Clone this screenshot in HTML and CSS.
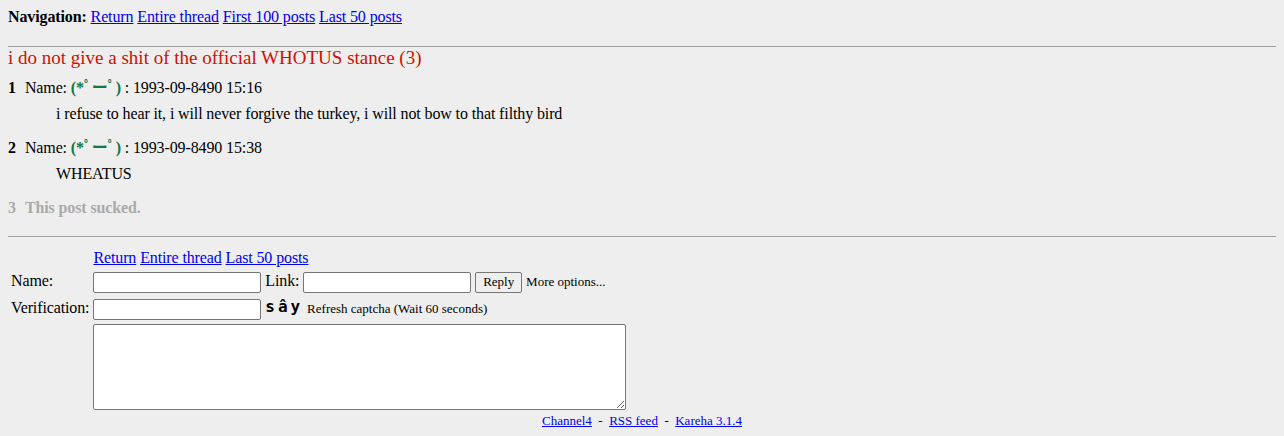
FILE: index.html
```html
<!DOCTYPE html>
<html lang="en">
<head>
  <meta charset="UTF-8">
  <title>i do not give a shit of the official WHOTUS stance</title>
  <link rel="stylesheet" href="styles.css">
</head>
<body>

  <!-- Navigation -->
  <div class="navbar">
    <strong>Navigation:</strong>
    <a href="#">Return</a>
    <a href="#">Entire thread</a>
    <a href="#">First 100 posts</a>
    <a href="#">Last 50 posts</a>
  </div>

  <hr>

  <!-- Thread -->
  <div class="thread">
    <h2 class="thread-title">i do not give a shit of the official WHOTUS stance (3)</h2>

    <div class="reply">
      <div class="replyheader">
        <span class="postnum">1</span>
        <span>Name: <span class="postername">(*ﾟーﾟ)</span> : 1993-09-8490 15:16</span>
      </div>
      <div class="replytext">i refuse to hear it, i will never forgive the turkey, i will not bow to that filthy bird</div>
    </div>

    <div class="reply">
      <div class="replyheader">
        <span class="postnum">2</span>
        <span>Name: <span class="postername">(*ﾟーﾟ)</span> : 1993-09-8490 15:38</span>
      </div>
      <div class="replytext">WHEATUS</div>
    </div>

    <div class="reply deleted">
      <div class="replyheader">
        <span class="postnum">3</span>
        <span>This post sucked.</span>
      </div>
    </div>
  </div>

  <hr class="thread-end">

  <!-- Antwortformular -->
  <form class="postform">
    <table>
      <tr>
        <td></td>
        <td class="links">
          <a href="#">Return</a>
          <a href="#">Entire thread</a>
          <a href="#">Last 50 posts</a>
        </td>
      </tr>
      <tr>
        <td class="label">Name:</td>
        <td class="field">
          <input type="text" class="text-input">
          Link: <input type="text" class="text-input">
          <button type="button" class="submit">Reply</button>
          <small>More options...</small>
        </td>
      </tr>
      <tr>
        <td class="label">Verification:</td>
        <td class="field">
          <input type="text" class="text-input">
          <span class="captcha">sâу</span>
          <small>Refresh captcha (Wait 60 seconds)</small>
        </td>
      </tr>
      <tr>
        <td></td>
        <td><textarea class="comment"></textarea></td>
      </tr>
    </table>
  </form>

  <div class="footer">
    <a href="#">Channel4</a> &nbsp;-&nbsp;
    <a href="#">RSS feed</a> &nbsp;-&nbsp;
    <a href="#">Kareha 3.1.4</a>
  </div>

</body>
</html>
```

FILE: styles.css
```css
body {
  margin: 8px;
  background-color: #eeeeee;
  color: #000;
  font-family: "Liberation Serif", "Noto Sans CJK JP", serif;
  font-size: 16px;
  line-height: 18px;
  letter-spacing: -0.12px;
}

a {
  color: #0000ee;
}

.navbar {
  height: 18px;
}

hr {
  border: 0;
  border-top: 1px solid #a0a0a0;
  height: 0;
  margin: 20px 0 0;
}

hr.thread-end {
  margin-top: 19px;
}

.thread-title {
  margin: 0;
  font-size: 19px;
  line-height: 22px;
  font-weight: normal;
  color: #cc1105;
  letter-spacing: 0;
}

.reply {
  margin-top: 10px;
}

.reply + .reply {
  margin-top: 16px;
}

.replyheader {
  display: flex;
  gap: 9px;
}

.postnum {
  font-weight: bold;
}

.postername {
  color: #117743;
  font-weight: bold;
}

.replytext {
  margin: 8px 0 0 48px;
}

.deleted {
  color: #aaaaaa;
  font-weight: bold;
}

.postform {
  margin-top: 10px;
}

.postform table {
  border-spacing: 2px;
  margin: 0;
}

.postform td {
  padding: 1px;
  vertical-align: middle;
}

.links {
  line-height: 16px;
}

.field {
  font-size: 16px;
  line-height: 21px;
  white-space: nowrap;
}

.text-input {
  box-sizing: border-box;
  width: 168px;
  height: 21px;
  margin: 0;
  vertical-align: middle;
  border: 1px solid #767676;
  border-radius: 2px;
  background: #fff;
}

.submit {
  height: 21px;
  padding: 1px 7px;
  font-family: "Liberation Serif", serif;
  font-size: 13px;
  vertical-align: middle;
  background: #efefef;
  border: 1px solid #767676;
  border-radius: 2px;
}

small {
  font-size: 13px;
  letter-spacing: 0;
}

.captcha {
  display: inline-block;
  margin-left: 0;
  font-family: "DejaVu Sans Mono", monospace;
  font-size: 16px;
  line-height: 16px;
  font-weight: bold;
  letter-spacing: 3px;
  vertical-align: 1px;
}

.comment {
  box-sizing: border-box;
  width: 533px;
  height: 86px;
  margin: 0;
  display: block;
  border: 1px solid #767676;
  border-radius: 2px;
  background: #fff;
}

.footer {
  text-align: center;
  font-size: 13px;
  line-height: 15px;
  letter-spacing: 0;
}
```
